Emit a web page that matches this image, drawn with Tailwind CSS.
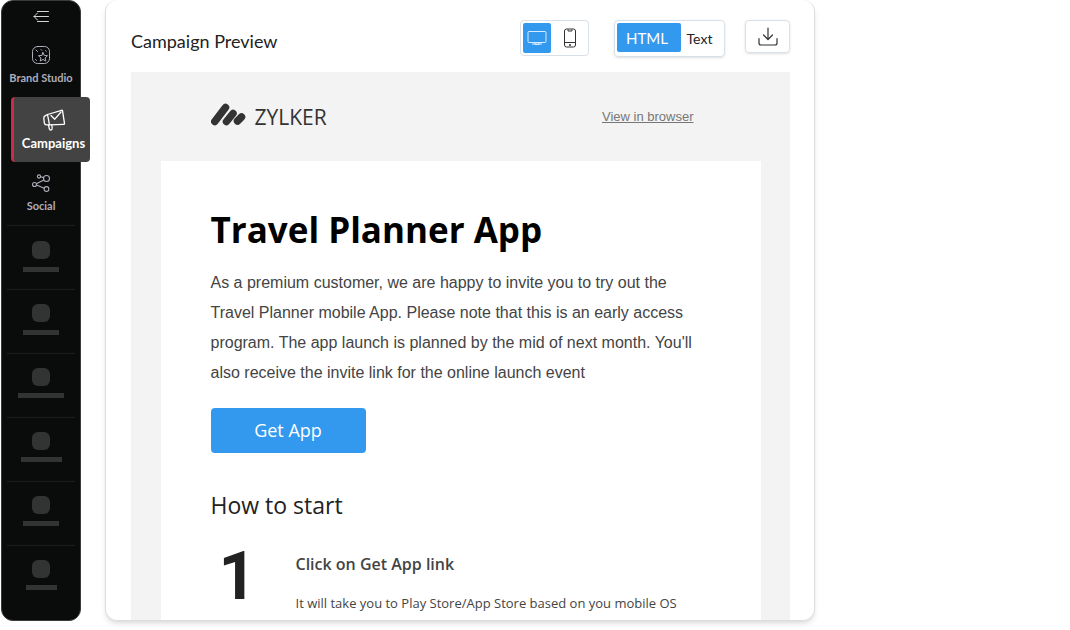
<!DOCTYPE html>
<html lang="en">
<head>
    <meta charset="UTF-8">
    <meta name="viewport" content="width=device-width, initial-scale=1.0">
    <title>Campaign Preview</title>
    <script src="https://cdn.jsdelivr.net/npm/@tailwindcss/browser@4"></script>
</head>
<body class="bg-white font-['Lato',sans-serif]">
    <div class="flex h-screen gap-6 pb-[9px] pl-px">

        <!-- sidebar -->
        <nav class="flex w-20 shrink-0 flex-col rounded-xl border border-[#3a3c3c] bg-[#0a0c0c] text-[11px] font-bold text-[#aeaebb]">
            <button type="button" aria-label="Collapse menu" class="flex h-8 items-center justify-center text-[#d4d4d4]">
                <svg class="h-4 w-4" viewBox="0 0 16 16" fill="none" stroke="currentColor" stroke-linecap="round" stroke-linejoin="round">
                    <path d="M4.5 2.5h11M1 7.5h14.5M4.5 12.5h11M4.5 4 1 7.5 4.5 11"/>
                </svg>
            </button>
            <a href="#" class="flex h-16 flex-col items-center gap-[5px] pt-3">
                <svg class="h-5 w-5" viewBox="0 0 20 20" fill="none" stroke="currentColor" stroke-linecap="round" stroke-linejoin="round">
                    <rect x="1.5" y="1.5" width="17" height="17" rx="5"/>
                    <path d="m12 7.5 1.3 2.9 3.2.3-2.4 2.2.7 3.2-2.8-1.7-2.8 1.7.7-3.2-2.4-2.2 3.2-.3z"/>
                    <path d="m5 5 1.5 1.5M10 4.5l.8.8M14.5 5.5l.8.8M4.5 14.5l1 1"/>
                </svg>
                <span class="whitespace-nowrap leading-4">Brand Studio</span>
            </a>
            <a href="#" aria-current="page" class="-mr-[10px] ml-[9px] flex h-[65px] flex-col items-center gap-px rounded border-l-3 border-[#cb2c48] bg-[#434343] pl-[3px] pt-[11px] text-white">
                <svg class="h-6 w-6" viewBox="0 0 24 24" fill="none" stroke="currentColor" stroke-width="1.3" stroke-linecap="round" stroke-linejoin="round">
                    <path d="M5.5 6.5 19.5 2.3c.7-.2 1 .1 1.1.8l1.9 12.2c.1.7-.2 1.1-.9 1.1L7.5 16.8z"/>
                    <path d="M5.5 6.5 3 7.8c-1 .5-1.3 1.3-1.2 2.4l.5 4.6c.2 1.4 1 2 2.2 2h3"/>
                    <path d="m9 7.5 3.8 3.7L19 4M6.5 17l.8 3.8c.3 1 1 1.4 1.9 1.2.9-.3 1.2-1 1-1.8L9.8 17"/>
                </svg>
                <span class="text-[13px] leading-5">Campaigns</span>
            </a>
            <a href="#" class="flex h-[63px] flex-col items-center gap-[3px] pt-[11px]">
                <svg class="h-5 w-5" viewBox="0 0 20 20" fill="none" stroke="currentColor" stroke-width="1.1">
                    <circle cx="3.5" cy="11.5" r="2"/>
                    <circle cx="8" cy="3.5" r="1.6"/>
                    <circle cx="15.5" cy="5.5" r="3"/>
                    <circle cx="15.5" cy="16" r="2.4"/>
                    <path d="m5.3 10.7 7.6-3.8M9.6 3.8l3 .8M5.5 12l7.7 3.3"/>
                </svg>
                <span class="leading-5">Social</span>
            </a>
            <div class="mx-[5px] flex h-16 flex-col items-center gap-2 border-t border-[#1b1d1d] pt-[15px]">
                <span class="h-[18px] w-[18px] rounded-md bg-[#323434]"></span>
                <span class="h-[5px] w-9 bg-[#323434]"></span>
            </div>
            <div class="mx-[5px] flex h-16 flex-col items-center gap-2 border-t border-[#1b1d1d] pt-[14px]">
                <span class="h-[18px] w-[18px] rounded-md bg-[#323434]"></span>
                <span class="h-[5px] w-9 bg-[#323434]"></span>
            </div>
            <div class="mx-[5px] flex h-16 flex-col items-center gap-[7px] border-t border-[#1b1d1d] pt-[14px]">
                <span class="h-[18px] w-[18px] rounded-md bg-[#323434]"></span>
                <span class="h-[5px] w-[46px] bg-[#323434]"></span>
            </div>
            <div class="mx-[5px] flex h-16 flex-col items-center gap-[7px] border-t border-[#1b1d1d] pt-[14px]">
                <span class="h-[18px] w-[18px] rounded-md bg-[#323434]"></span>
                <span class="h-[5px] w-[41px] bg-[#323434]"></span>
            </div>
            <div class="mx-[5px] flex h-16 flex-col items-center gap-[7px] border-t border-[#1b1d1d] pt-[14px]">
                <span class="h-[18px] w-[18px] rounded-md bg-[#323434]"></span>
                <span class="h-[5px] w-9 bg-[#323434]"></span>
            </div>
            <div class="mx-[5px] flex h-16 flex-col items-center gap-[7px] border-t border-[#1b1d1d] pt-[14px]">
                <span class="h-[18px] w-[18px] rounded-md bg-[#323434]"></span>
                <span class="h-[5px] w-[31px] bg-[#323434]"></span>
            </div>
        </nav>

        <!-- preview card -->
        <main class="flex max-w-[710px] flex-1 flex-col overflow-hidden rounded-xl border border-t-0 border-[#dedede] bg-white pl-[25px] pr-6 shadow-md">
            <header class="flex h-[72px] shrink-0 items-start pt-[19px]">
                <h1 class="mt-2 flex-1 text-lg leading-7 text-[#222]">Campaign Preview</h1>

                <div class="mt-px flex rounded-sm border border-[#d8e0e9] p-0.5">
                    <button type="button" aria-label="Desktop view" class="flex h-[30px] w-7 items-center justify-center rounded-xs bg-[#3399ee] text-[#d5ecff]">
                        <svg class="h-4 w-5" viewBox="0 0 20 16" fill="none" stroke="currentColor">
                            <rect x="1" y="1.5" width="18" height="11" rx="1"/>
                            <path d="M5 14h10M8 13v1.5h4V13"/>
                        </svg>
                    </button>
                    <button type="button" aria-label="Mobile view" class="flex h-[30px] w-[35px] items-center justify-center pl-0.5 text-[#333]">
                        <svg class="h-5 w-3" viewBox="0 0 12 20" fill="none" stroke="currentColor">
                            <rect x=".5" y="1" width="11" height="18" rx="2"/>
                            <path d="M.5 14.5h11M4 1.5V3h4V1.5M5.5 16.5h1v1h-1z"/>
                        </svg>
                    </button>
                </div>

                <div class="ml-[25px] mt-px flex rounded-sm border border-[#d8e0e9] p-0.5 pb-1 text-sm shadow-sm">
                    <button type="button" class="h-[29px] w-16 rounded-xs bg-[#3399ee] pr-1 pt-0.5 text-[15px] text-white">HTML</button>
                    <button type="button" class="h-[29px] w-[41px] pl-1 pr-2 pt-0.5 text-[#222]">Text</button>
                </div>

                <button type="button" aria-label="Download" class="ml-5 mt-px flex h-[33px] w-[45px] items-center justify-center rounded-sm border border-[#d8e0e9] text-[#333] shadow-sm">
                    <svg class="h-5 w-5" viewBox="0 0 20 20" fill="none" stroke="currentColor" stroke-width="1.2" stroke-linecap="round" stroke-linejoin="round">
                        <path d="M10 1v11M5.5 8l4.500 4.5L14.5 8M1 11.5V16a2 2 0 0 0 2 2h14a2 2 0 0 0 2-2v-4.5"/>
                    </svg>
                </button>
            </header>

            <!-- email -->
            <div class="flex-1 overflow-hidden bg-[#f3f3f3] font-['Trebuchet_MS','Open_Sans',sans-serif]">
                <div class="mx-auto max-w-[600px]">
                    <div class="flex h-[89px] items-center justify-between pl-[50px] pr-[67px]">
                        <div class="flex items-center gap-2 text-[#333]">
                            <svg class="h-7 w-9" viewBox="0 0 36 28" fill="none" stroke="currentColor" stroke-width="7.5" stroke-linecap="round">
                                <path d="M3.8 18.5 14.5 4.5M15.5 18.5 22 10.5M26.5 18l4-4"/>
                            </svg>
                            <span class="text-[21px] leading-7">ZYLKER</span>
                        </div>
                        <a href="#" class="font-['Liberation_Sans',sans-serif] text-[13px] text-[#777] underline">View in browser</a>
                    </div>
                    <article class="bg-white px-[50px] pb-10 pt-11 text-[#444]">
                        <h2 class="whitespace-nowrap text-[35px] font-bold leading-[50px] text-black">Travel Planner App</h2>
                        <p class="mt-[13px] font-['Liberation_Sans',sans-serif] text-base leading-[30px]">As a premium customer, we are happy to invite you to try out the Travel Planner mobile App. Please note that this is an early access program. The app launch is planned by the mid of next month. You'll also receive the invite link for the online launch event</p>
                        <a href="#" class="mt-5 flex h-[45px] w-[155px] items-center justify-center rounded-sm bg-[#3399ee] pb-0.5 text-lg text-white">Get App</a>
                        <h3 class="mt-9 text-[23px] leading-8 text-[#222]">How to start</h3>
                        <div class="mt-[23px] flex">
                            <span class="w-[85px] pl-2 font-['Roboto',sans-serif] text-[66px] font-bold leading-[66px] text-[#222]">1</span>
                            <div class="flex-1">
                                <h4 class="mt-2 text-base font-semibold leading-6">Click on Get App link</h4>
                                <p class="mt-[15px] whitespace-nowrap text-[13px] leading-6">It will take you to Play Store/App Store based on you mobile OS</p>
                            </div>
                        </div>
                    </article>
                </div>
            </div>
        </main>
    </div>
</body>
</html>
